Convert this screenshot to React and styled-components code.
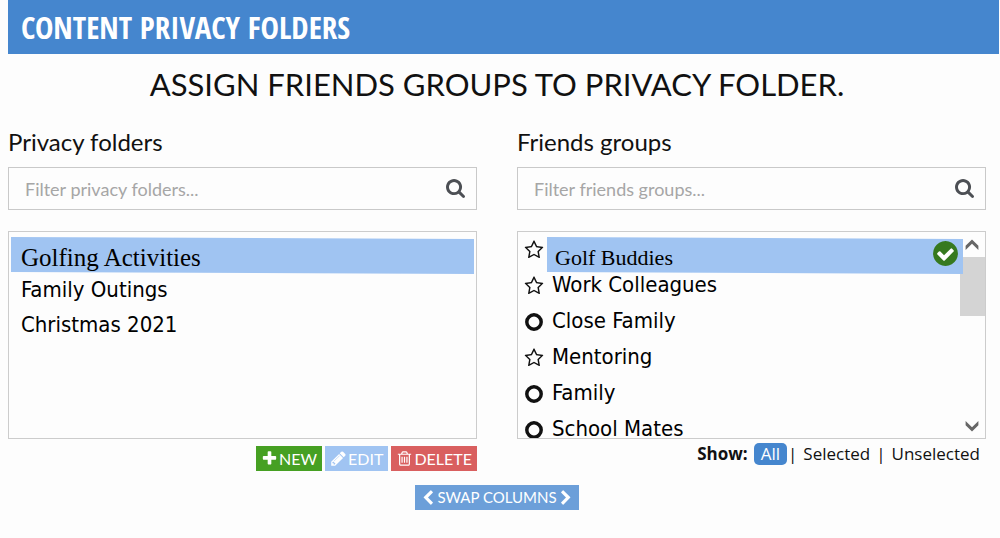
import { useRef, useState } from "react";
import styled, { createGlobalStyle } from "styled-components";

const GlobalStyle = createGlobalStyle`
    * {
        box-sizing: border-box;
    }
    body {
        margin: 0;
        background: #fdfdfd;
        color: #111;
        font-family: Lato, "Liberation Sans", sans-serif;
    }
    button {
        font: inherit;
        color: inherit;
        border: 0;
        background: none;
        padding: 0;
        cursor: pointer;
    }
`;

const ICONS = {
    search: "M1152 704q0-185-131.5-316.5T704 256 387.5 387.5 256 704t131.5 316.5T704 1152t316.5-131.5T1152 704zm512 832q0 52-38 90t-90 38q-54 0-90-38l-343-342q-179 124-399 124-143 0-273.5-55.5t-225-150-150-225T0 704t55.5-273.5 150-225 225-150T704 0t273.5 55.5 225 150 150 225T1408 704q0 220-124 399l343 343q37 37 37 90z",
    plus: "M1600 736v192q0 40-28 68t-68 28h-416v416q0 40-28 68t-68 28h-192q-40 0-68-28t-28-68v-416h-416q-40 0-68-28t-28-68v-192q0-40 28-68t68-28h416v-416q0-40 28-68t68-28h192q40 0 68 28t28 68v416h416q40 0 68 28t28 68z",
    pencil: "M491 1536l91-91-235-235-91 91v107h128v128h107zm523-928q0-22-22-22-10 0-17 7l-542 542q-7 7-7 17 0 22 22 22 10 0 17-7l542-542q7-7 7-17zm-54-192l416 416-832 832h-416v-416zm683 96q0 53-37 90l-166 166-416-416 166-165q36-38 90-38 53 0 91 38l235 234q37 39 37 91z",
    trash: "M704 736v576q0 14-9 23t-23 9h-64q-14 0-23-9t-9-23v-576q0-14 9-23t23-9h64q14 0 23 9t9 23zm256 0v576q0 14-9 23t-23 9h-64q-14 0-23-9t-9-23v-576q0-14 9-23t23-9h64q14 0 23 9t9 23zm256 0v576q0 14-9 23t-23 9h-64q-14 0-23-9t-9-23v-576q0-14 9-23t23-9h64q14 0 23 9t9 23zm128 724v-948h-896v948q0 22 7 40.5t14.5 27 10.5 8.5h832q3 0 10.5-8.5t14.5-27 7-40.5zm-672-1076h448l-48-117q-7-9-17-11h-317q-10 2-17 11zm928 32v64q0 14-9 23t-23 9h-96v948q0 83-47 143.5t-113 60.5h-832q-66 0-113-58.5t-47-141.5v-952h-96q-14 0-23-9t-9-23v-64q0-14 9-23t23-9h309l70-167q15-37 54-63t79-26h320q40 0 79 26t54 63l70 167h309q14 0 23 9t9 23z",
    left: "M1427 301l-531 531 531 531q19 19 19 45t-19 45l-166 166q-19 19-45 19t-45-19l-742-742q-19-19-19-45t19-45l742-742q19-19 45-19t45 19l166 166q19 19 19 45t-19 45z",
    right: "M1363 877l-742 742q-19 19-45 19t-45-19l-166-166q-19-19-19-45t19-45l531-531-531-531q-19-19-19-45t19-45l166-166q19-19 45-19t45 19l742 742q19 19 19 45t-19 45z",
    star: "M1201 1004l306-297-422-62-189-382-189 382-422 62 306 297-73 421 378-199 377 199zm527-357q0 22-26 48l-363 354 86 500q1 7 1 20 0 50-41 50-19 0-40-12l-449-236-449 236q-22 12-40 12-21 0-31.5-14.5t-10.5-35.5q0-6 2-20l86-500-364-354q-25-27-25-48 0-37 56-46l502-73 225-455q19-41 49-41t49 41l225 455 502 73q56 9 56 46z",
    circle: "M896 96a800 800 0 1 0 0 1600a800 800 0 1 0 0-1600zm0 310a490 490 0 1 1 0 980a490 490 0 1 1 0-980z",
    check: "M1412 734q0-28-18-46l-91-90q-19-19-45-19t-45 19l-408 407-226-226q-19-19-45-19t-45 19l-91 90q-18 18-18 46 0 27 18 45l362 362q19 19 45 19 27 0 46-19l543-543q18-18 18-45zm252 162q0 209-103 385.5t-279.5 279.5-385.5 103-385.5-103-279.5-279.5-103-385.5 103-385.5 279.5-279.5 385.5-103 385.5 103 279.5 279.5 103 385.5z",
    up: "M180 980l716-700 716 700v480l-716-700-716 700z",
    down: "M180 812l716 700 716-700v-480l-716 700-716-700z",
};

const Svg = styled.svg`
    flex: none;
    display: block;
    fill: currentColor;
    fill-rule: evenodd;
`;

function Icon({ name, size }) {
    const box = name === "search" ? 1664 : 1792;
    return (
        <Svg width={size} height={size} viewBox={`0 0 ${box} ${box}`} aria-hidden="true">
            <path d={ICONS[name]}/>
        </Svg>
    );
}

const Header = styled.header`
    display: flex;
    align-items: center;
    height: 54px;
    margin: 0 1px 0 8px;
    padding: 0 13px;
    background: #4586ce;
    color: #fff;
`;
const HeaderTitle = styled.h1`
    margin: 0;
    font: bold 31px/38px "Open Sans Condensed", "Liberation Sans Narrow", "Open Sans", sans-serif;
    text-transform: uppercase;
`;

const Main = styled.main`
    padding: 10px 14px 28px 8px;
`;
const Heading = styled.h2`
    margin: 0;
    font-size: 31px;
    font-weight: 400;
    line-height: 40px;
    text-align: center;
    text-transform: uppercase;
`;
const Columns = styled.div`
    display: grid;
    grid-template-columns: 1fr 1fr;
    gap: 40px;
    margin-top: 24px;
`;
const Label = styled.label`
    display: block;
    font-size: 24px;
    line-height: 28px;
`;
const FilterBox = styled.div`
    display: flex;
    align-items: center;
    height: 43px;
    margin: 11px 0 21px;
    padding: 0 11px 0 16px;
    border: 1px solid #c9c9c9;
    color: #4c4f54;
`;
const FilterInput = styled.input`
    flex: 1;
    min-width: 0;
    padding: 0;
    border: 0;
    outline: 0;
    background: none;
    font: 18px/24px Lato, sans-serif;
    &::placeholder {
        color: #a6a6a6;
        opacity: 1;
    }
`;

const Panel = styled.div`
    display: flex;
    height: 208px;
    border: 1px solid #ccc;
`;
const List = styled.ul`
    position: relative;
    z-index: 1;
    flex: 1;
    margin: 0;
    padding: ${props => props.$inset ? '5px 2px' : '0'};
    list-style: none;
    overflow: hidden;
`;
const Row = styled.li`
    display: flex;
    align-items: center;
    gap: 3px;
    height: ${props => props.$grouped ? 36 : 35}px;
    padding-left: ${props => props.$grouped ? 6 : 0}px;
`;
const Item = styled.button`
    display: flex;
    align-items: center;
    justify-content: space-between;
    flex: 1;
    height: 36px;
    color: #000;
    text-align: left;
    font: 22px/30px "DejaVu Sans Condensed", "Noto Sans", sans-serif;
    padding: 0 4px ${props => props.$grouped ? 3 : 0}px ${props => props.$grouped ? 5 : 10}px;
`;
// the highlight band slants down slightly to the right
const ActiveItem = styled(Item)`
    align-self: flex-start;
    flex-shrink: 0;
    height: 37px;
    margin-top: ${props => props.$grouped ? 5 : 0}px;
    padding: 4px 3px 0 ${props => props.$grouped ? 8 : 10}px;
    background: #a0c4f2;
    clip-path: polygon(0 0, 100% 2px, 100% 100%, 0 calc(100% - 2px));
    font: ${props => props.$grouped ? 22 : 25}px/30px "Liberation Serif", serif;
`;
const Check = styled.span`
    display: flex;
    margin-bottom: 8px;
    border-radius: 50%;
    background: radial-gradient(#fff 50%, transparent 52%);
    color: #36791f;
`;

const Scrollbar = styled.div`
    display: flex;
    flex-direction: column;
    width: 22px;
`;
const ScrollButton = styled.button`
    display: flex;
    align-items: center;
    justify-content: center;
    height: 25px;
    padding-right: 4px;
    color: #666;
`;
const Thumb = styled.div`
    height: 59px;
    margin: 0 0 auto -3px;
    background: #d4d4d4;
`;

const Actions = styled.div`
    display: flex;
    justify-content: flex-end;
    gap: 3px;
    margin-top: 7px;
`;
const ActionButton = styled.button`
    display: flex;
    align-items: center;
    gap: 1px;
    height: 25px;
    padding: 0 5px;
    background: ${props => props.$color};
    color: #fff;
    font-size: ${props => props.$small ? 15 : 16}px;
    line-height: 25px;
    text-transform: uppercase;
`;
const ShowRow = styled.div`
    display: flex;
    align-items: center;
    justify-content: flex-end;
    gap: 6px;
    height: 24px;
    margin-top: 3px;
    padding-right: 6px;
    font: 17px/24px "Open Sans", "Noto Sans", sans-serif;
`;
const ShowOption = styled.button`
    height: 22px;
    line-height: 22px;
    ${props => props.$active && `
        margin-right: -5px;
        padding: 0 7px;
        border-radius: 5px;
        background: #4586ce;
        color: #fff;
    `}
`;
const Footer = styled.footer`
    display: flex;
    justify-content: center;
    margin-top: 14px;
`;

const folders = ["Golfing Activities", "Family Outings", "Christmas 2021"];
const groups = [
    { name: "Golf Buddies", icon: "star" },
    { name: "Work Colleagues", icon: "star" },
    { name: "Close Family", icon: "circle" },
    { name: "Mentoring", icon: "star" },
    { name: "Family", icon: "circle" },
    { name: "School Mates", icon: "circle" },
];

const matches = (name, filter) => name.toLowerCase().includes(filter.toLowerCase());

function Filter({ id, label, value, onChange }) {
    return (
        <>
            <Label htmlFor={id}>{label}</Label>
            <FilterBox>
                <FilterInput
                    id={id}
                    value={value}
                    placeholder={`Filter ${label.toLowerCase()}...`}
                    onChange={e => onChange(e.target.value)}
                />
                <Icon name="search" size={19}/>
            </FilterBox>
        </>
    );
}

function FolderColumn() {
    const [filter, setFilter] = useState("");
    const [active, setActive] = useState(folders[0]);
    return (
        <section>
            <Filter id="folders" label="Privacy folders" value={filter} onChange={setFilter}/>
            <Panel>
                <List $inset>
                    {folders.filter(name => matches(name, filter)).map(name => {
                        const Entry = name === active ? ActiveItem : Item;
                        return (
                            <Row key={name}>
                                <Entry onClick={() => setActive(name)}>{name}</Entry>
                            </Row>
                        );
                    })}
                </List>
            </Panel>
            <Actions>
                <ActionButton $color="#46a023"><Icon name="plus" size={17}/>New</ActionButton>
                <ActionButton $color="#a0c4f2"><Icon name="pencil" size={17}/>Edit</ActionButton>
                <ActionButton $color="#d95f5f"><Icon name="trash" size={17}/>Delete</ActionButton>
            </Actions>
        </section>
    );
}

function GroupColumn() {
    const [filter, setFilter] = useState("");
    const [show, setShow] = useState("All");
    const [selected, setSelected] = useState(["Golf Buddies"]);
    const listRef = useRef(null);
    const scroll = top => listRef.current?.scrollBy({ top });
    const toggle = name => setSelected(selected.includes(name)
        ? selected.filter(item => item !== name)
        : [...selected, name]);
    const visible = groups.filter(({ name }) => matches(name, filter)
        && (show === "All" || selected.includes(name) === (show === "Selected")));
    return (
        <section>
            <Filter id="groups" label="Friends groups" value={filter} onChange={setFilter}/>
            <Panel>
                <List ref={listRef}>
                    {visible.map(({ name, icon }) => {
                        const isSelected = selected.includes(name);
                        const Entry = isSelected ? ActiveItem : Item;
                        return (
                            <Row key={name} $grouped>
                                <Icon name={icon} size={20}/>
                                <Entry $grouped onClick={() => toggle(name)}>
                                    {name}
                                    {isSelected && <Check><Icon name="check" size={29}/></Check>}
                                </Entry>
                            </Row>
                        );
                    })}
                </List>
                <Scrollbar>
                    <ScrollButton aria-label="Scroll up" onClick={() => scroll(-36)}><Icon name="up" size={16}/></ScrollButton>
                    <Thumb/>
                    <ScrollButton aria-label="Scroll down" onClick={() => scroll(36)}><Icon name="down" size={16}/></ScrollButton>
                </Scrollbar>
            </Panel>
            <ShowRow>
                <b>Show:</b>
                <ShowOption $active={show === "All"} onClick={() => setShow("All")}>All</ShowOption>
                <span>|</span>
                <ShowOption $active={show === "Selected"} onClick={() => setShow("Selected")}>Selected</ShowOption>
                <span>|</span>
                <ShowOption $active={show === "Unselected"} onClick={() => setShow("Unselected")}>Unselected</ShowOption>
            </ShowRow>
        </section>
    );
}

function App() {
    const [swapped, setSwapped] = useState(false);
    const columns = [<FolderColumn key="folders"/>, <GroupColumn key="groups"/>];
    return (
        <>
            <GlobalStyle/>
            <Header>
                <HeaderTitle>Content Privacy Folders</HeaderTitle>
            </Header>
            <Main>
                <Heading>Assign friends groups to privacy folder.</Heading>
                <Columns>{swapped ? columns.reverse() : columns}</Columns>
                <Footer>
                    <ActionButton $small $color="#6c9fd9" onClick={() => setSwapped(!swapped)}>
                        <Icon name="left" size={16}/>Swap columns<Icon name="right" size={16}/>
                    </ActionButton>
                </Footer>
            </Main>
        </>
    );
}

export default App;
